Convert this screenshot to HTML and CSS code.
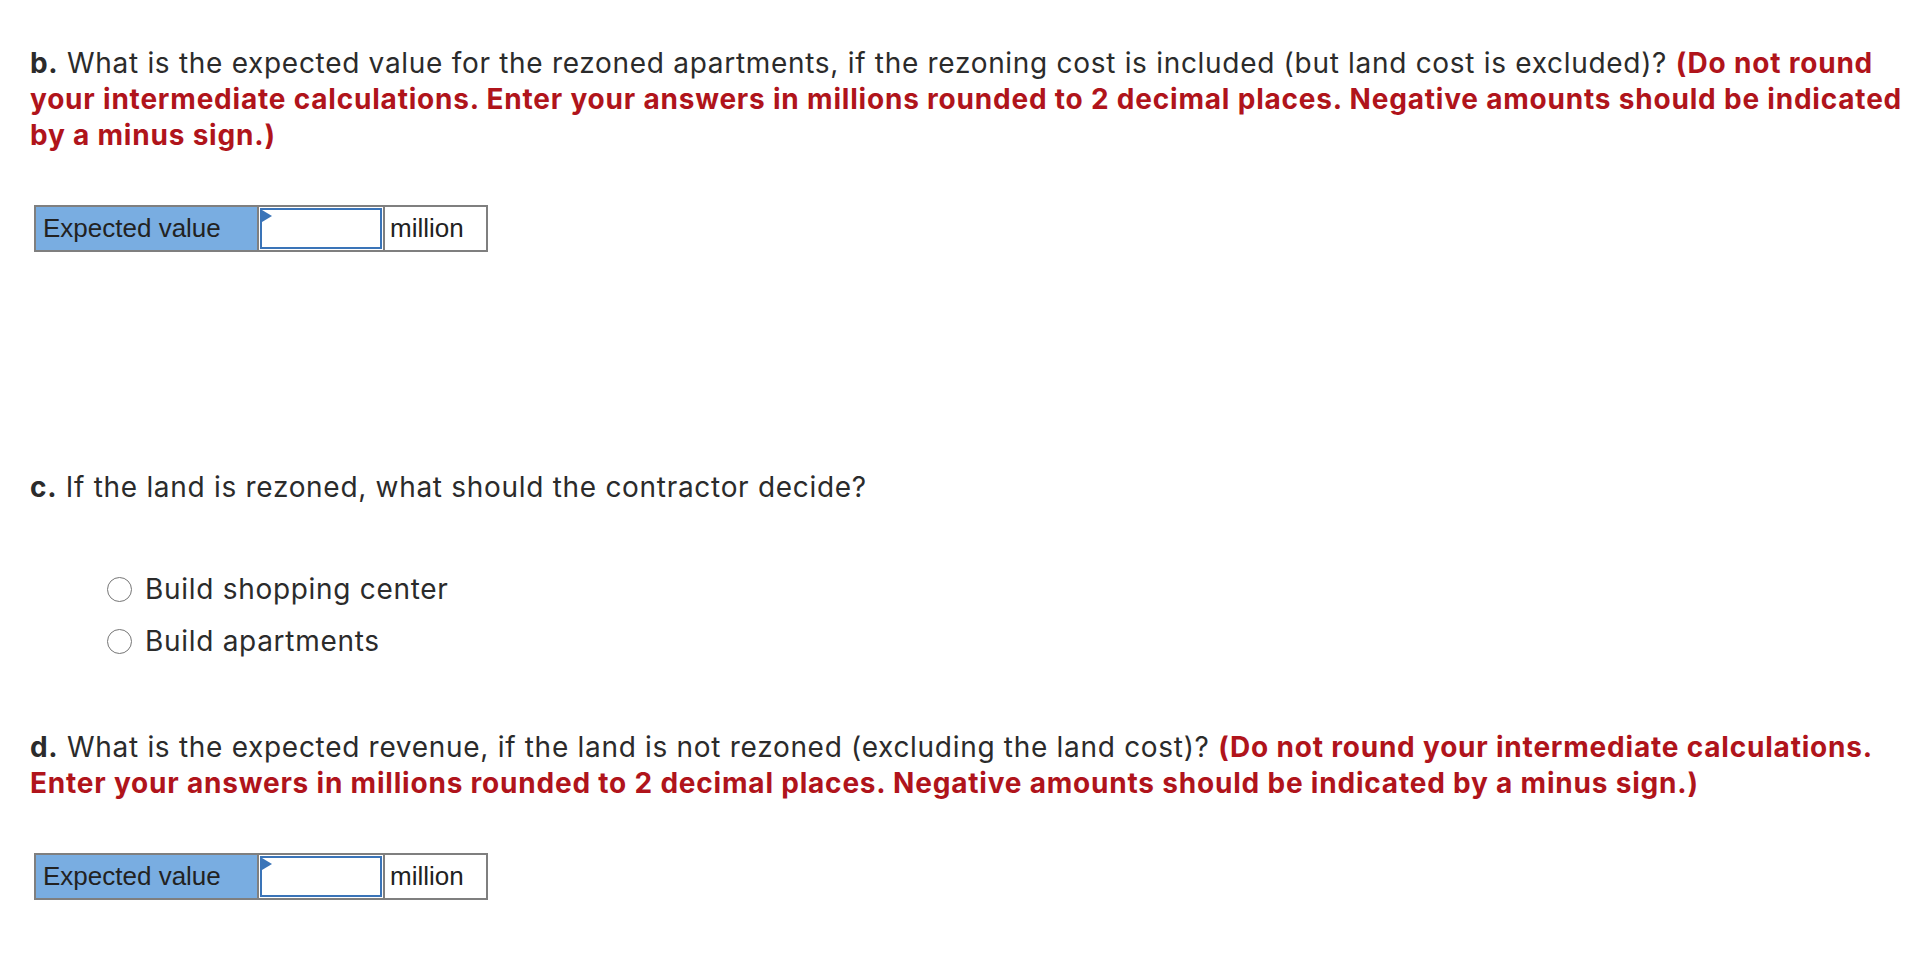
FILE: index.html
```html
<!DOCTYPE html>
<html>
<head>
<meta charset="utf-8">
<link rel="stylesheet" href="styles.css">
</head>
<body>
<div class="page">
  <p class="question q-b"><strong>b.</strong> What is the expected value for the rezoned apartments, if the rezoning cost is included (but land cost is excluded)? <span class="hint">(Do not round your intermediate calculations. Enter your answers in millions rounded to 2 decimal places. Negative amounts should be indicated by a minus sign.)</span></p>

  <table class="answer">
    <tr>
      <td class="label">Expected value</td>
      <td class="field"><div class="box"><span class="flag"></span></div></td>
      <td class="unit">million</td>
    </tr>
  </table>

  <p class="question q-c"><strong>c.</strong> If the land is rezoned, what should the contractor decide?</p>

  <ul class="choices">
    <li class="choice"><span class="radio"></span>Build shopping center</li>
    <li class="choice"><span class="radio"></span>Build apartments</li>
  </ul>

  <p class="question q-d"><strong>d.</strong> What is the expected revenue, if the land is not rezoned (excluding the land cost)? <span class="hint">(Do not round your intermediate calculations. Enter your answers in millions rounded to 2 decimal places. Negative amounts should be indicated by a minus sign.)</span></p>

  <table class="answer">
    <tr>
      <td class="label">Expected value</td>
      <td class="field"><div class="box"><span class="flag"></span></div></td>
      <td class="unit">million</td>
    </tr>
  </table>
</div>
</body>
</html>
```

FILE: styles.css
```css
html, body {
  margin: 0;
  padding: 0;
  background: #ffffff;
}

body {
  font-family: Inter, Lato, "Noto Sans", sans-serif;
  color: #2b2b2b;
}

.page {
  padding: 45px 4px 0 30px;
}

.question {
  margin: 0;
  font-size: 28px;
  line-height: 36px;
  letter-spacing: 0.7px;
}

.question strong {
  font-weight: 700;
  color: #2b2b2b;
}

.hint {
  color: #b0141b;
  font-weight: 700;
  letter-spacing: 0.8px;
}

.answer {
  border-collapse: collapse;
  margin: 52px 0 0 4px;
  font-family: "Liberation Sans", Arial, sans-serif;
  font-size: 26px;
  color: #222222;
}

.answer td {
  border: 2px solid #7f7f7f;
  height: 43px;
  padding: 0;
  vertical-align: middle;
}

.label {
  background: #79ade1;
  width: 214px;
  padding-left: 7px !important;
}

.field {
  width: 124px;
}

.box {
  position: relative;
  margin: 1px;
  height: 37px;
  border: 2px solid #3a74b8;
  background: #ffffff;
}

.flag {
  position: absolute;
  left: 0;
  top: 0;
  width: 0;
  height: 0;
  border-top: 6px solid transparent;
  border-bottom: 6px solid transparent;
  border-left: 10px solid #3a74b8;
}

.unit {
  width: 96px;
  padding-left: 5px !important;
  background: #ffffff;
}

.q-c {
  margin-top: 217px;
}

.choices {
  list-style: none;
  margin: 66px 0 0 77px;
  padding: 0;
  display: flex;
  flex-direction: column;
  gap: 16px;
}

.choice {
  display: flex;
  align-items: center;
  gap: 13px;
  font-size: 28px;
  line-height: 36px;
  letter-spacing: 0.7px;
}

.radio {
  display: inline-block;
  width: 23px;
  height: 23px;
  border: 1.5px solid #767676;
  border-radius: 50%;
  background: #ffffff;
  flex: none;
}

.q-d {
  margin-top: 70px;
}
```
